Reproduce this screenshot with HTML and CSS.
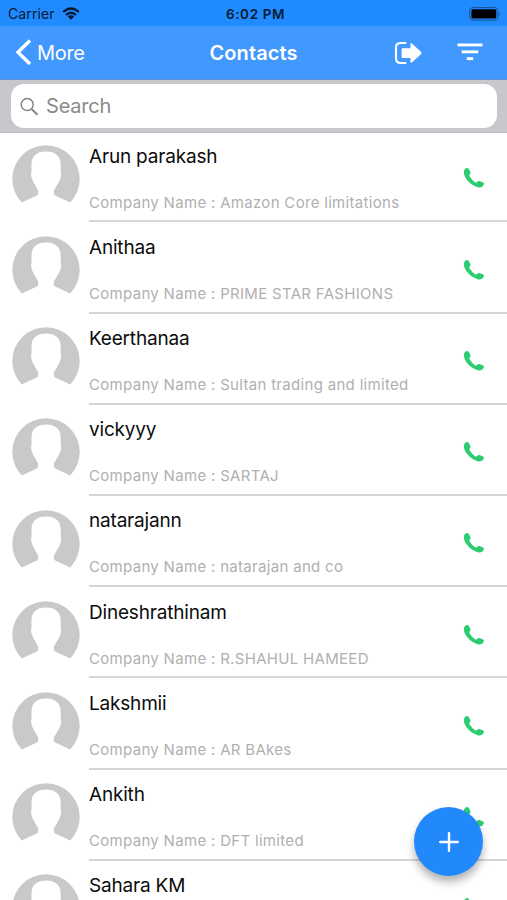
FILE: index.html
```html
<!DOCTYPE html>
<html lang="en">
<head>
<meta charset="utf-8">
<title>Contacts</title>
<link rel="stylesheet" href="styles.css">
</head>
<body>
<svg class="defs" width="0" height="0" aria-hidden="true">
  <symbol id="avatar" viewBox="0 0 68 58">
    <path fill="#c9c9c9" d="M9.8 57.4A33.7 33.7 0 1 1 58.2 57.4L43.2 50.6Q41.9 50 41.9 48.5V45.5L47.6 35.5Q49.2 32 49.2 28.5L48.7 27.5V20C48.7 11 43.5 6.5 34 6.5C24.5 6.5 19.5 11 19.5 20V27.5L19 28.5Q19 32 20.6 35.5L26.1 45.5V48.5Q26.1 50 24.8 50.6Z"/>
  </symbol>
  <symbol id="phone" viewBox="0 0 22 22">
    <path fill="#2ecc71" d="M1.2 3.2Q2 1.1 4.4 1Q5.2 1 5.9 2.3L7.4 5Q8 6.4 6.9 7.3Q5.9 8.1 6.5 9.2Q9 13.2 12.3 15.4Q13.2 15.9 14 15Q15 13.7 16.5 14L20.1 15.4Q21.4 16 20.9 17.2C19.8 20 17.5 21 14.7 20.3C8 18.5 1.5 11.5 .9 6.3Q.7 4.5 1.2 3.2Z"/>
  </symbol>
</svg>
<div class="screen">
  <header class="status">
    <div class="carrier"><span class="carrier-name">Carrier</span>
      <svg width="18" height="13" viewBox="0 0 18 13" fill="none" stroke="#061a33" stroke-width="2.3"><path d="M1.2 5Q9-2 16.8 5M4 8Q9 3.6 14 8"/><path fill="#061a33" stroke="none" d="M5.8 9.5Q9 6.9 12.2 9.5L9 12.8Z"/></svg>
    </div>
    <span class="time">6:02 PM</span>
    <svg class="battery" width="33" height="14" viewBox="0 0 33 14"><rect x=".8" y=".6" width="28" height="12.6" rx="3" fill="none" stroke="#14508f"/><rect x="2.4" y="2.2" width="24.8" height="9.4" rx="1.5" fill="#000"/><path d="M30.3 5Q32 7 30.3 9Z" fill="#14508f"/></svg>
  </header>
  <nav class="navbar">
    <a class="back"><svg width="17" height="27" viewBox="0 0 17 27" fill="none" stroke="#fff" stroke-width="3.4"><path d="M15 1.5 3 13.3 15 25"/></svg><span class="back-text">More</span></a>
    <h1>Contacts</h1>
    <div class="actions">
      <svg width="28" height="24" viewBox="0 0 28 24"><path d="M12.3 2H6.8Q2 2 2 6.5V17.5Q2 22 6.8 22H12.3" fill="none" stroke="#fff" stroke-width="2.1"/><path fill="#fff" d="M8.5 7.3H16.5V3Q16.5 1.2 17.8 2.5L27 10.8Q28 12 27 13.2L17.8 21.5Q16.5 22.7 16.5 21V17H8.5Q7.6 17 7.6 16V8.3Q7.6 7.3 8.5 7.3Z"/></svg>
      <svg class="filter" width="26" height="18" viewBox="0 0 26 18" fill="#fff"><rect x=".5" y=".5" width="25" height="2.9"/><rect x="4.7" y="7.4" width="16.6" height="2.9"/><rect x="9.8" y="14.2" width="6.4" height="2.9"/></svg>
    </div>
  </nav>
  <div class="searchbar">
    <label class="search"><svg width="19" height="19" viewBox="0 0 19 19" fill="none" stroke="#848484" stroke-width="1.5"><circle cx="7.2" cy="7.5" r="6"/><path d="m11.5 12 6 5.7" stroke-width="2"/></svg><span>Search</span></label>
  </div>
  <main class="list">
    <article class="row"><svg class="avatar"><use href="#avatar"/></svg><div class="info"><h2>Arun parakash</h2><p>Company Name : Amazon Core limitations</p><svg class="phone"><use href="#phone"/></svg></div></article>
    <article class="row"><svg class="avatar"><use href="#avatar"/></svg><div class="info"><h2>Anithaa</h2><p>Company Name : PRIME STAR FASHIONS</p><svg class="phone"><use href="#phone"/></svg></div></article>
    <article class="row"><svg class="avatar"><use href="#avatar"/></svg><div class="info"><h2>Keerthanaa</h2><p>Company Name : Sultan trading and limited</p><svg class="phone"><use href="#phone"/></svg></div></article>
    <article class="row"><svg class="avatar"><use href="#avatar"/></svg><div class="info"><h2>vickyyy</h2><p>Company Name : SARTAJ</p><svg class="phone"><use href="#phone"/></svg></div></article>
    <article class="row"><svg class="avatar"><use href="#avatar"/></svg><div class="info"><h2>natarajann</h2><p>Company Name : natarajan and co</p><svg class="phone"><use href="#phone"/></svg></div></article>
    <article class="row"><svg class="avatar"><use href="#avatar"/></svg><div class="info"><h2>Dineshrathinam</h2><p>Company Name : R.SHAHUL HAMEED</p><svg class="phone"><use href="#phone"/></svg></div></article>
    <article class="row"><svg class="avatar"><use href="#avatar"/></svg><div class="info"><h2>Lakshmii</h2><p>Company Name : AR BAkes</p><svg class="phone"><use href="#phone"/></svg></div></article>
    <article class="row"><svg class="avatar"><use href="#avatar"/></svg><div class="info"><h2>Ankith</h2><p>Company Name : DFT limited</p><svg class="phone"><use href="#phone"/></svg></div></article>
    <article class="row"><svg class="avatar"><use href="#avatar"/></svg><div class="info"><h2>Sahara KM</h2><svg class="phone"><use href="#phone"/></svg></div></article>
  </main>
  <button class="fab" aria-label="Add contact"><svg width="20" height="20" viewBox="0 0 20 20" stroke="#fff" stroke-width="2.4" stroke-linecap="round"><path d="M10 1.3V18.7M1.3 10H18.7"/></svg></button>
</div>
</body>
</html>
```
FILE: styles.css
```css
* { box-sizing: border-box; }
body { margin: 0; font-family: Inter, "Liberation Sans", sans-serif; background: #fff; }
h1, h2, p { margin: 0; white-space: nowrap; }
svg { display: block; flex: none; }
.defs { position: absolute; }
.screen { position: relative; width: 507px; height: 900px; overflow: hidden; display: flex; flex-direction: column; }
.status { height: 26px; flex: none; background: #208aff; display: grid; grid-template-columns: 1fr auto 1fr; align-items: center; padding: 1px 5px 0 8px; color: #061a33; }
.carrier { display: flex; align-items: center; gap: 7px; font-size: 14px; }
.carrier-name { letter-spacing: .1px; }
.time { font-size: 13.5px; font-weight: 600; letter-spacing: .6px; padding-left: 1px; }
.battery { justify-self: end; }
.navbar { height: 54px; flex: none; background: #4198fe; border-bottom: 1px solid #5c91d6; color: #fff; display: grid; grid-template-columns: 1fr auto 1fr; align-items: center; padding: 0 24px 0 15px; }
.back { display: flex; align-items: center; gap: 5px; font-size: 20px; letter-spacing: -.3px; }
h1 { font-size: 20px; font-weight: 600; letter-spacing: .1px; padding-left: 9px; }
.actions { display: flex; justify-content: flex-end; align-items: center; gap: 35px; }
.filter { margin-top: -1px; }
.searchbar { height: 53px; flex: none; background: #c8c8cc; border-bottom: 1px solid #bebec2; padding: 4px 10px 5px 11px; }
.search { height: 44px; background: #fff; border-radius: 13px; display: flex; align-items: center; gap: 7px; padding-left: 9px; font-size: 20px; letter-spacing: -.2px; color: #8b8b8b; }
.list { flex: 1; min-height: 0; overflow: hidden; }
.row { height: 91.23px; display: flex; padding-left: 12px; gap: 9px; }
.row:first-child { height: 89.4px; }
.row:first-child .avatar { margin-top: 11.7px; }
.row:first-child .info { padding-top: 11.5px; }
.row:first-child .phone { top: 34.4px; }
.avatar { width: 68px; height: 58px; margin-top: 13.5px; }
.info { position: relative; flex: 1; padding-top: 13.3px; border-bottom: 2px solid #d6d6d6; }
h2 { font-size: 19px; line-height: 24px; font-weight: 400; letter-spacing: -.19px; color: #0c0c0c; }
p { margin-top: 24px; font-size: 15px; line-height: 20px; letter-spacing: .31px; color: #b0b0b0; }
.phone { position: absolute; right: 22px; top: 36.3px; width: 22px; height: 22px; }
.fab { position: absolute; left: 414px; top: 807px; width: 69px; height: 69px; border: 0; padding: 0; border-radius: 50%; background: #2189fb; display: flex; align-items: center; justify-content: center; box-shadow: 0 6px 9px rgba(0,0,0,.3); }
```
